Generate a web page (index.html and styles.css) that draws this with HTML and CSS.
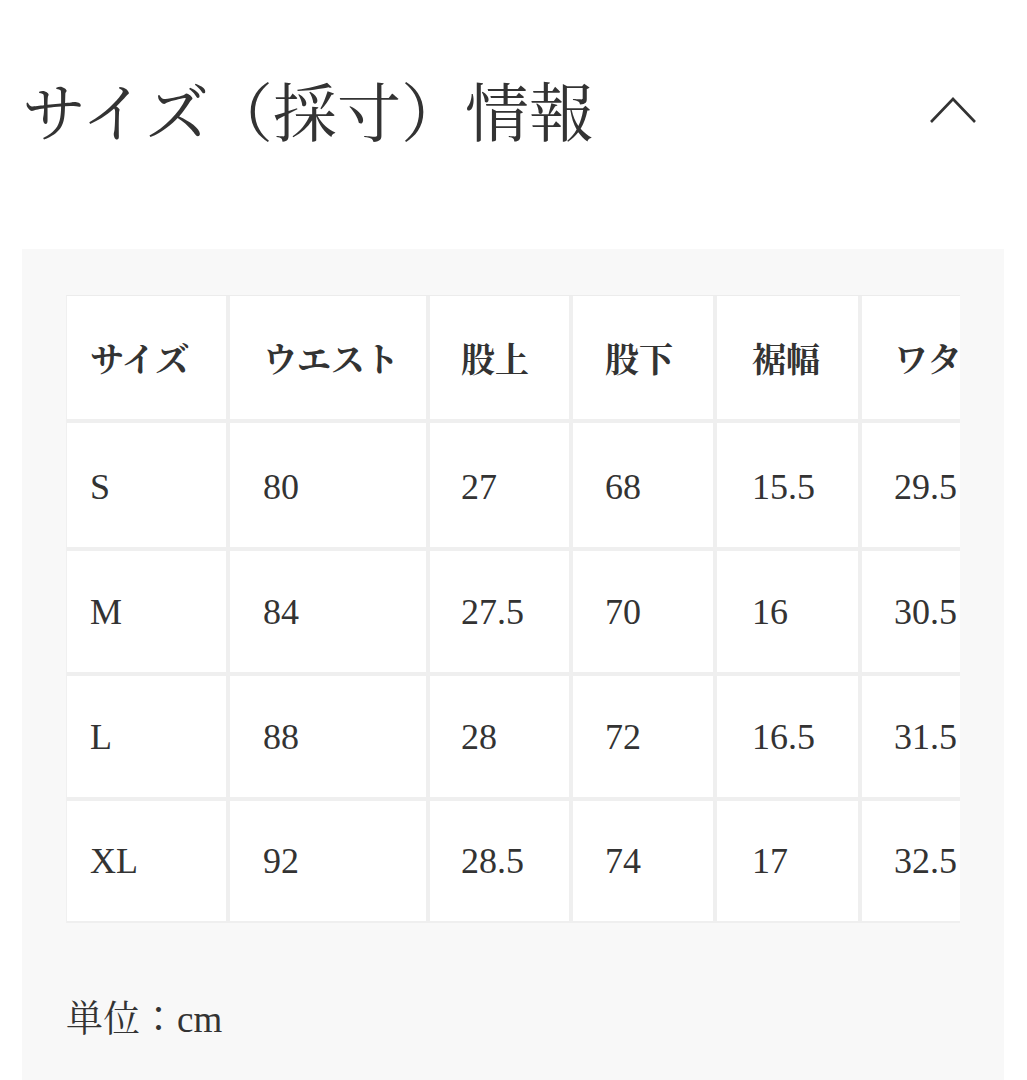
FILE: index.html
```html
<!DOCTYPE html>
<html lang="ja">
<head>
<meta charset="utf-8">
<title>サイズ（採寸）情報</title>
<link rel="stylesheet" href="styles.css">
</head>
<body>
<section class="size-info">
  <header class="head">
    <h2 class="title">サイズ（採寸）情報</h2>
    <svg class="chevron" width="48" height="28" viewBox="0 0 48 28" aria-hidden="true">
      <polyline points="2,26 24,3 46,26" fill="none" stroke="#333" stroke-width="2.6"/>
    </svg>
  </header>
  <div class="panel">
    <div class="scroll">
      <table class="sizes">
        <thead>
          <tr><th><span class="ja">サイズ</span></th><th><span class="ja">ウエスト</span></th><th><span class="ja">股上</span></th><th><span class="ja">股下</span></th><th><span class="ja">裾幅</span></th><th><span class="ja">ワタリ</span></th></tr>
        </thead>
        <tbody>
          <tr><td>S</td><td>80</td><td>27</td><td>68</td><td>15.5</td><td>29.5</td></tr>
          <tr><td>M</td><td>84</td><td>27.5</td><td>70</td><td>16</td><td>30.5</td></tr>
          <tr><td>L</td><td>88</td><td>28</td><td>72</td><td>16.5</td><td>31.5</td></tr>
          <tr><td>XL</td><td>92</td><td>28.5</td><td>74</td><td>17</td><td>32.5</td></tr>
        </tbody>
      </table>
    </div>
    <p class="unit">単位：cm</p>
  </div>
</section>
</body>
</html>
```
FILE: styles.css
```css
* { box-sizing: border-box; }
html, body { margin: 0; padding: 0; background: #fff; }
body {
  color: #333;
  font-family: "Liberation Serif", "Noto Serif CJK JP", "Noto Sans CJK JP", serif;
  width: 1027px;
  height: 1080px;
  overflow: hidden;
}
.head {
  height: 216px;
  display: flex;
  align-items: center;
  justify-content: space-between;
  padding: 0 50px 0 22px;
  margin-bottom: 33px;
}
.title {
  margin: 0;
  font-size: 64px;
  font-weight: 400;
  line-height: 1;
  letter-spacing: 0;
  font-family: "Noto Serif CJK JP", "Noto Sans CJK JP", serif;
}
.chevron { display: block; margin-top: 4px; }
.panel {
  margin: 0 23px 0 22px;
  background: #f8f8f8;
  padding: 46px 44px 80px 44px;
  min-height: 900px;
}
.scroll {
  overflow: hidden;
  border-top: 1px solid #ececec;
  border-left: 1px solid #f0f0f0;
}
.sizes {
  border-collapse: separate;
  border-spacing: 0;
  table-layout: fixed;
  width: 941px;
  background: #fff;
}
.sizes th, .sizes td {
  height: 125px;
  border-right: 4px solid #efefef;
  border-bottom: 4px solid #efefef;
  text-align: left;
  vertical-align: middle;
  padding: 0 0 0 32px;
  font-size: 36px;
  white-space: nowrap;
  overflow: hidden;
}
.sizes th { font-weight: 700; height: 127px; }
.sizes tbody tr:first-child td { height: 128px; padding-top: 4px; }
.sizes tbody tr:last-child td { border-bottom-width: 2px; height: 122px; }
.sizes th:nth-child(1), .sizes td:nth-child(1) { width: 163px; padding-left: 23px; }
.sizes th:nth-child(2), .sizes td:nth-child(2) { width: 200px; padding-left: 33px; }
.sizes th:nth-child(3), .sizes td:nth-child(3) { width: 143px; padding-left: 31px; }
.sizes th:nth-child(4), .sizes td:nth-child(4) { width: 144px; padding-left: 32px; }
.sizes th:nth-child(5), .sizes td:nth-child(5) { width: 145px; padding-left: 35px; }
.sizes th:nth-child(6), .sizes td:nth-child(6) { width: 146px; padding-left: 32px; }
.ja {
  font-family: "Noto Serif CJK JP", "Noto Sans CJK JP", serif;
  font-size: 34px;
}
.unit {
  margin: 70px 0 0 0;
  font-size: 37px;
  line-height: 54px;
  font-family: "Liberation Serif", "Noto Serif CJK JP", "Noto Sans CJK JP", serif;
}
```
